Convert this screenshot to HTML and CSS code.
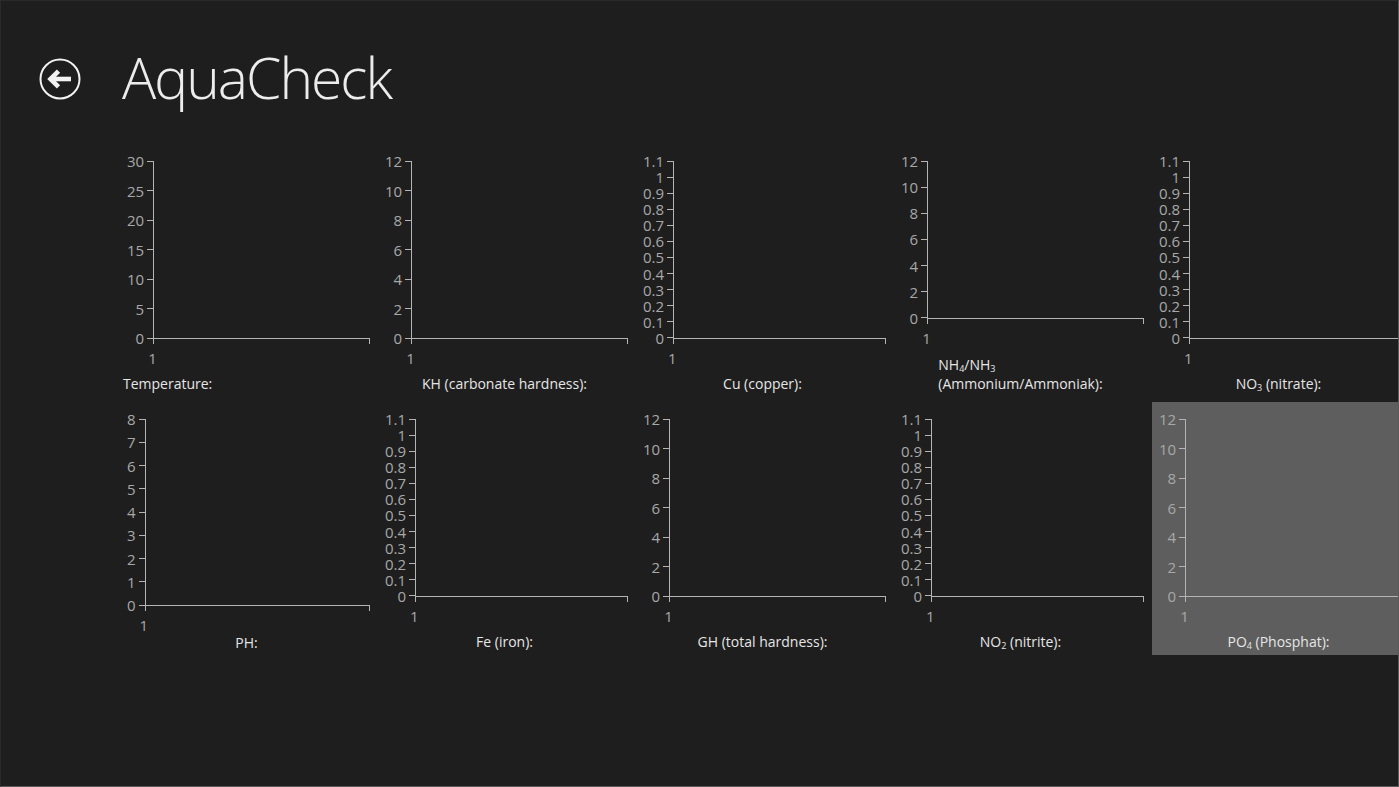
FILE: index.html
```html
<!DOCTYPE html>
<html lang="en">
<head>
<meta charset="utf-8">
<title>AquaCheck</title>
<link rel="stylesheet" href="styles.css">
</head>
<body>
<div class="page">
  <header class="header">
    <button class="back" aria-label="Back">
      <svg width="42" height="42" viewBox="0 0 42 42">
        <circle cx="21" cy="21" r="19.5" fill="none" stroke="#f2f2f2" stroke-width="2"/>
        <path d="M12.5 21 H32" stroke="#f2f2f2" stroke-width="4.6" fill="none"/>
        <path d="M19.5 13.2 L11.5 21 L19.5 28.8" stroke="#f2f2f2" stroke-width="4.6" fill="none" stroke-linejoin="miter"/>
      </svg>
    </button>
    <h1 class="title">AquaCheck</h1>
  </header>

  <main class="grid">
    <!-- Row 1 -->
    <section class="tile">
      <div class="chart">
        <div class="yaxis h-norm"><span>30</span><span>25</span><span>20</span><span>15</span><span>10</span><span>5</span><span>0</span></div>
        <div class="plot"></div>
        <div class="xlab">1</div>
      </div>
      <div class="name name-left">Temperature:</div>
    </section>

    <section class="tile">
      <div class="chart">
        <div class="yaxis h-norm"><span>12</span><span>10</span><span>8</span><span>6</span><span>4</span><span>2</span><span>0</span></div>
        <div class="plot"></div>
        <div class="xlab">1</div>
      </div>
      <div class="name">KH (carbonate hardness):</div>
    </section>

    <section class="tile">
      <div class="chart">
        <div class="yaxis h-norm dense"><span>1.1</span><span>1</span><span>0.9</span><span>0.8</span><span>0.7</span><span>0.6</span><span>0.5</span><span>0.4</span><span>0.3</span><span>0.2</span><span>0.1</span><span>0</span></div>
        <div class="plot"></div>
        <div class="xlab">1</div>
      </div>
      <div class="name">Cu (copper):</div>
    </section>

    <section class="tile">
      <div class="chart">
        <div class="yaxis h-short"><span>12</span><span>10</span><span>8</span><span>6</span><span>4</span><span>2</span><span>0</span></div>
        <div class="plot"></div>
        <div class="xlab">1</div>
      </div>
      <div class="name"><span class="name-block">NH<sub>4</sub>/NH<sub>3</sub><br>(Ammonium/Ammoniak):</span></div>
    </section>

    <section class="tile">
      <div class="chart">
        <div class="yaxis h-norm dense"><span>1.1</span><span>1</span><span>0.9</span><span>0.8</span><span>0.7</span><span>0.6</span><span>0.5</span><span>0.4</span><span>0.3</span><span>0.2</span><span>0.1</span><span>0</span></div>
        <div class="plot"></div>
        <div class="xlab">1</div>
      </div>
      <div class="name">NO<sub>3</sub> (nitrate):</div>
    </section>

    <!-- Row 2 -->
    <section class="tile">
      <div class="chart">
        <div class="yaxis h-tall"><span>8</span><span>7</span><span>6</span><span>5</span><span>4</span><span>3</span><span>2</span><span>1</span><span>0</span></div>
        <div class="plot"></div>
        <div class="xlab">1</div>
      </div>
      <div class="name name-tight">PH:</div>
    </section>

    <section class="tile">
      <div class="chart">
        <div class="yaxis h-norm dense"><span>1.1</span><span>1</span><span>0.9</span><span>0.8</span><span>0.7</span><span>0.6</span><span>0.5</span><span>0.4</span><span>0.3</span><span>0.2</span><span>0.1</span><span>0</span></div>
        <div class="plot"></div>
        <div class="xlab">1</div>
      </div>
      <div class="name">Fe (iron):</div>
    </section>

    <section class="tile">
      <div class="chart">
        <div class="yaxis h-norm"><span>12</span><span>10</span><span>8</span><span>6</span><span>4</span><span>2</span><span>0</span></div>
        <div class="plot"></div>
        <div class="xlab">1</div>
      </div>
      <div class="name">GH (total hardness):</div>
    </section>

    <section class="tile">
      <div class="chart">
        <div class="yaxis h-norm dense"><span>1.1</span><span>1</span><span>0.9</span><span>0.8</span><span>0.7</span><span>0.6</span><span>0.5</span><span>0.4</span><span>0.3</span><span>0.2</span><span>0.1</span><span>0</span></div>
        <div class="plot"></div>
        <div class="xlab">1</div>
      </div>
      <div class="name">NO<sub>2</sub> (nitrite):</div>
    </section>

    <section class="tile tile-selected">
      <div class="chart">
        <div class="yaxis h-norm"><span>12</span><span>10</span><span>8</span><span>6</span><span>4</span><span>2</span><span>0</span></div>
        <div class="plot"></div>
        <div class="xlab">1</div>
      </div>
      <div class="name">PO<sub>4</sub> (Phosphat):</div>
    </section>
  </main>
</div>
</body>
</html>
```

FILE: styles.css
```css
html, body {
  margin: 0;
  padding: 0;
  background: #1e1e1e;
  overflow: hidden;
}

.page {
  width: 1399px;
  height: 787px;
  box-sizing: border-box;
  border-top: 1px solid #2a2a2a;
  border-left: 1px solid #2a2a2a;
  border-right: 1px solid #5a5a5a;
  border-bottom: 1px solid #5a5a5a;
  overflow: hidden;
  font-family: "Open Sans", "Noto Sans", sans-serif;
  color: #e4e4e4;
}

.header {
  display: flex;
  align-items: flex-start;
  height: 143px;
  padding-left: 38px;
  box-sizing: border-box;
}

.back {
  margin: 57px 0 0 0;
  padding: 0;
  border: 0;
  background: none;
  width: 42px;
  height: 42px;
  display: block;
}
.back svg { display: block; }

.title {
  margin: 48px 0 0 41px;
  font-weight: 300;
  font-size: 57px;
  line-height: 57px;
  letter-spacing: -2px;
  color: #ececec;
}

.grid {
  display: grid;
  grid-template-columns: repeat(5, 253px);
  grid-auto-rows: 253px;
  gap: 5px;
  padding-left: 119px;
}

.tile {
  display: flex;
  flex-direction: column;
  box-sizing: border-box;
  padding-top: 9px;
  height: 253px;
}

.tile-selected {
  background: #5e5e5e;
}

.chart {
  display: grid;
  grid-template-columns: auto 1fr;
  grid-template-rows: auto auto;
  padding: 0 3px 0 7px;
  flex-shrink: 0;
}

.yaxis {
  display: flex;
  flex-direction: column;
  justify-content: space-between;
  align-items: flex-end;
  font-size: 15px;
  line-height: 16px;
  color: #a8a8a8;
}
.yaxis span {
  display: flex;
  align-items: center;
  height: 16px;
}
.yaxis span::after {
  content: "";
  display: block;
  width: 6px;
  height: 1px;
  margin-left: 3px;
  background: #b4b4b4;
}

.h-norm { height: 193px; }
.h-short { height: 173px; }
.h-tall { height: 202px; }

.plot {
  position: relative;
  margin: 8px 0 7px 0;
  border-left: 1px solid #b4b4b4;
  border-bottom: 1px solid #b4b4b4;
}
.plot::before,
.plot::after {
  content: "";
  position: absolute;
  bottom: -6px;
  width: 1px;
  height: 6px;
  background: #b4b4b4;
}
.plot::before { left: -1px; }
.plot::after { right: 0; }

.xlab {
  grid-column: 2;
  font-size: 15px;
  line-height: 16px;
  color: #a8a8a8;
  margin: 4px 0 0 -5px;
}

.name {
  margin-top: auto;
  padding-bottom: 4px;
  font-size: 14px;
  line-height: 19px;
  text-align: center;
  color: #e6e6e6;
}
.name-left {
  text-align: left;
  padding-left: 3px;
}
.name-tight {
  margin-bottom: -1px;
}
.name-block {
  display: inline-block;
  text-align: left;
}
.name sub {
  font-size: 9px;
  line-height: 0;
  vertical-align: -2px;
}
```
